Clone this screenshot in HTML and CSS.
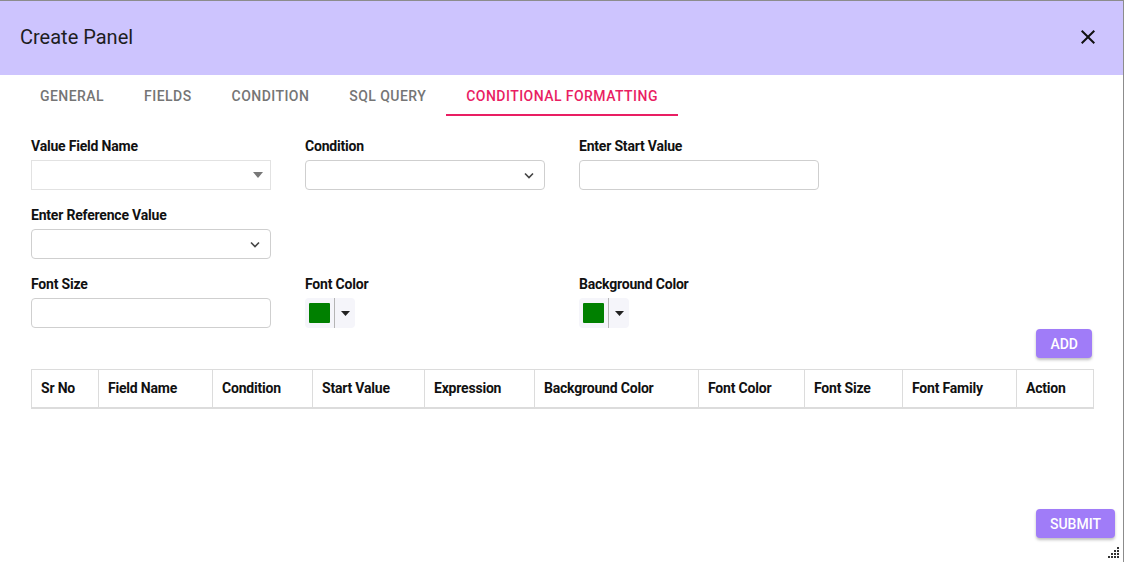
FILE: index.html
```html
<!DOCTYPE html>
<html lang="en">
<head>
<meta charset="utf-8">
<title>Create Panel</title>
<link rel="stylesheet" href="styles.css">
</head>
<body>
<div class="dialog">
  <header class="dlg-header">
    <h1 class="dlg-title">Create Panel</h1>
    <button class="close-btn" aria-label="Close">
      <svg width="24" height="24" viewBox="0 0 24 24"><path d="M19 6.41 17.59 5 12 10.59 6.41 5 5 6.41 10.59 12 5 17.59 6.41 19 12 13.41 17.59 19 19 17.59 13.41 12z" fill="#111"/></svg>
    </button>
  </header>
  <nav class="tabs">
    <div class="tab">GENERAL</div>
    <div class="tab">FIELDS</div>
    <div class="tab">CONDITION</div>
    <div class="tab">SQL QUERY</div>
    <div class="tab active">CONDITIONAL FORMATTING</div>
  </nav>
  <main class="dlg-body">
    <div class="form-grid">
      <div class="field">
        <label class="lbl">Value Field Name</label>
        <div class="input plain-select">
          <svg class="tri" width="10" height="6" viewBox="0 0 10 6"><path d="M0 0h10L5 6z" fill="#777"/></svg>
        </div>
      </div>
      <div class="field">
        <label class="lbl">Condition</label>
        <div class="input select">
          <svg class="chev" width="10" height="7" viewBox="0 0 10 7"><path d="M1 1.5l4 4 4-4" fill="none" stroke="#444" stroke-width="1.6"/></svg>
        </div>
      </div>
      <div class="field">
        <label class="lbl">Enter Start Value</label>
        <div class="input"></div>
      </div>
      <div class="field">
        <label class="lbl">Enter Reference Value</label>
        <div class="input select">
          <svg class="chev" width="10" height="7" viewBox="0 0 10 7"><path d="M1 1.5l4 4 4-4" fill="none" stroke="#444" stroke-width="1.6"/></svg>
        </div>
      </div>
      <div class="field empty"></div>
      <div class="field empty"></div>
      <div class="field">
        <label class="lbl">Font Size</label>
        <div class="input"></div>
      </div>
      <div class="field">
        <label class="lbl">Font Color</label>
        <div class="picker">
          <span class="swatch"></span>
          <span class="pick-div"></span>
          <svg class="pick-caret" width="9" height="5" viewBox="0 0 9 5"><path d="M0 0h9L4.5 5z" fill="#222"/></svg>
        </div>
      </div>
      <div class="field">
        <label class="lbl">Background Color</label>
        <div class="picker">
          <span class="swatch"></span>
          <span class="pick-div"></span>
          <svg class="pick-caret" width="9" height="5" viewBox="0 0 9 5"><path d="M0 0h9L4.5 5z" fill="#222"/></svg>
        </div>
      </div>
    </div>
    <div class="add-row"><button class="btn">ADD</button></div>
    <table class="grid">
      <colgroup>
        <col style="width:67px"><col style="width:114px"><col style="width:100px"><col style="width:112px"><col style="width:110px"><col style="width:164px"><col style="width:106px"><col style="width:98px"><col style="width:114px"><col style="width:77px">
      </colgroup>
      <thead>
        <tr>
          <th>Sr No</th><th>Field Name</th><th>Condition</th><th>Start Value</th><th>Expression</th><th>Background Color</th><th>Font Color</th><th>Font Size</th><th>Font Family</th><th>Action</th>
        </tr>
      </thead>
    </table>
  </main>
  <footer class="dlg-footer"><button class="btn">SUBMIT</button></footer>
  <div class="grip">
    <svg width="12" height="12" viewBox="0 0 12 12" fill="#333">
      <rect x="9" y="0" width="2" height="2"/>
      <rect x="6" y="3" width="2" height="2"/><rect x="9" y="3" width="2" height="2"/>
      <rect x="3" y="6" width="2" height="2"/><rect x="6" y="6" width="2" height="2"/><rect x="9" y="6" width="2" height="2"/>
      <rect x="0" y="9" width="2" height="2"/><rect x="3" y="9" width="2" height="2"/><rect x="6" y="9" width="2" height="2"/><rect x="9" y="9" width="2" height="2"/>
    </svg>
  </div>
</div>
</body>
</html>
```
FILE: styles.css
```css
* { box-sizing: border-box; }
html, body { margin: 0; padding: 0; background: #fff; }
body { font-family: Roboto, "Liberation Sans", sans-serif; color: #212121; }

.dialog {
  position: relative;
  width: 1124px;
  height: 562px;
  border-top: 1px solid #8c8c8c;
  border-right: 1px solid #8c8c8c;
  display: flex;
  flex-direction: column;
  background: #fff;
}

.dlg-header {
  height: 74px;
  flex: none;
  background: #cdc4fe;
  display: flex;
  align-items: center;
  justify-content: space-between;
  padding: 0 23px 2px 20px;
}
.dlg-title {
  margin: 0;
  font-size: 20px;
  font-weight: 400;
  color: #1e1e1e;
}
.close-btn {
  border: 0;
  background: transparent;
  padding: 0;
  width: 24px;
  height: 24px;
  display: flex;
  cursor: pointer;
}

.tabs {
  flex: none;
  display: flex;
  padding-left: 20px;
  height: 41px;
}
.tab {
  padding: 2px 20px 0;
  height: 41px;
  display: flex;
  align-items: center;
  font-size: 14px;
  font-weight: 500;
  letter-spacing: 0.45px;
  color: #757575;
  border-bottom: 2px solid transparent;
}
.tab.active {
  color: #e91e63;
  border-bottom-color: #e91e63;
}

.dlg-body {
  flex: 1;
  padding: 22px 31px 0 31px;
  display: flex;
  flex-direction: column;
}

.form-grid {
  display: grid;
  grid-template-columns: repeat(3, 240px);
  column-gap: 34px;
  row-gap: 17px;
}
.field { display: flex; flex-direction: column; height: 52px; }
.lbl {
  font-size: 14px;
  font-weight: 700;
  line-height: 17px;
  height: 17px;
  margin-bottom: 5px;
  color: #111;
  letter-spacing: -0.2px;
}
.input {
  height: 30px;
  border: 1px solid #cfcfcf;
  border-radius: 4px;
  background: #fff;
  position: relative;
  display: flex;
  align-items: center;
  justify-content: flex-end;
  padding-right: 10px;
}
.plain-select {
  border-radius: 0;
  border-color: #e2e2e2;
  padding-right: 7px;
}
.tri { display: block; }
.chev { display: block; }

.picker {
  width: 50px;
  height: 30px;
  background: #f5f5fa;
  border-radius: 4px;
  display: flex;
  align-items: center;
  padding-left: 4px;
}
.swatch {
  width: 21px;
  height: 20px;
  background: #008000;
  border-radius: 1px;
}
.pick-div {
  width: 1px;
  height: 30px;
  background: #b5b5b5;
  margin-left: 4px;
}
.pick-caret { margin-left: 6px; }

.add-row {
  display: flex;
  justify-content: flex-end;
  margin-top: 1px;
}
.btn {
  border: 0;
  border-radius: 4px;
  background: #a07cf8;
  color: #fff;
  font-family: Roboto, "Liberation Sans", sans-serif;
  font-size: 14px;
  font-weight: 500;
  height: 29px;
  padding: 0 14px;
  box-shadow: 0 2px 3px rgba(0,0,0,0.25);
  cursor: pointer;
}

.grid {
  margin-top: 11px;
  width: 1062px;
  border-collapse: collapse;
  table-layout: fixed;
}
.grid th {
  text-align: left;
  font-size: 14px;
  font-weight: 700;
  color: #111;
  letter-spacing: -0.2px;
  height: 38px;
  padding: 0 9px;
  border: 1px solid #dcdcdc;
  border-bottom: 2px solid #dcdcdc;
}

.dlg-footer {
  flex: none;
  display: flex;
  justify-content: flex-end;
  padding: 0 8px 24px 0;
}
.dlg-footer .btn { height: 29px; padding: 0 14px; }

.grip {
  position: absolute;
  right: 3px;
  bottom: 3px;
  width: 12px;
  height: 12px;
  display: flex;
}
```
